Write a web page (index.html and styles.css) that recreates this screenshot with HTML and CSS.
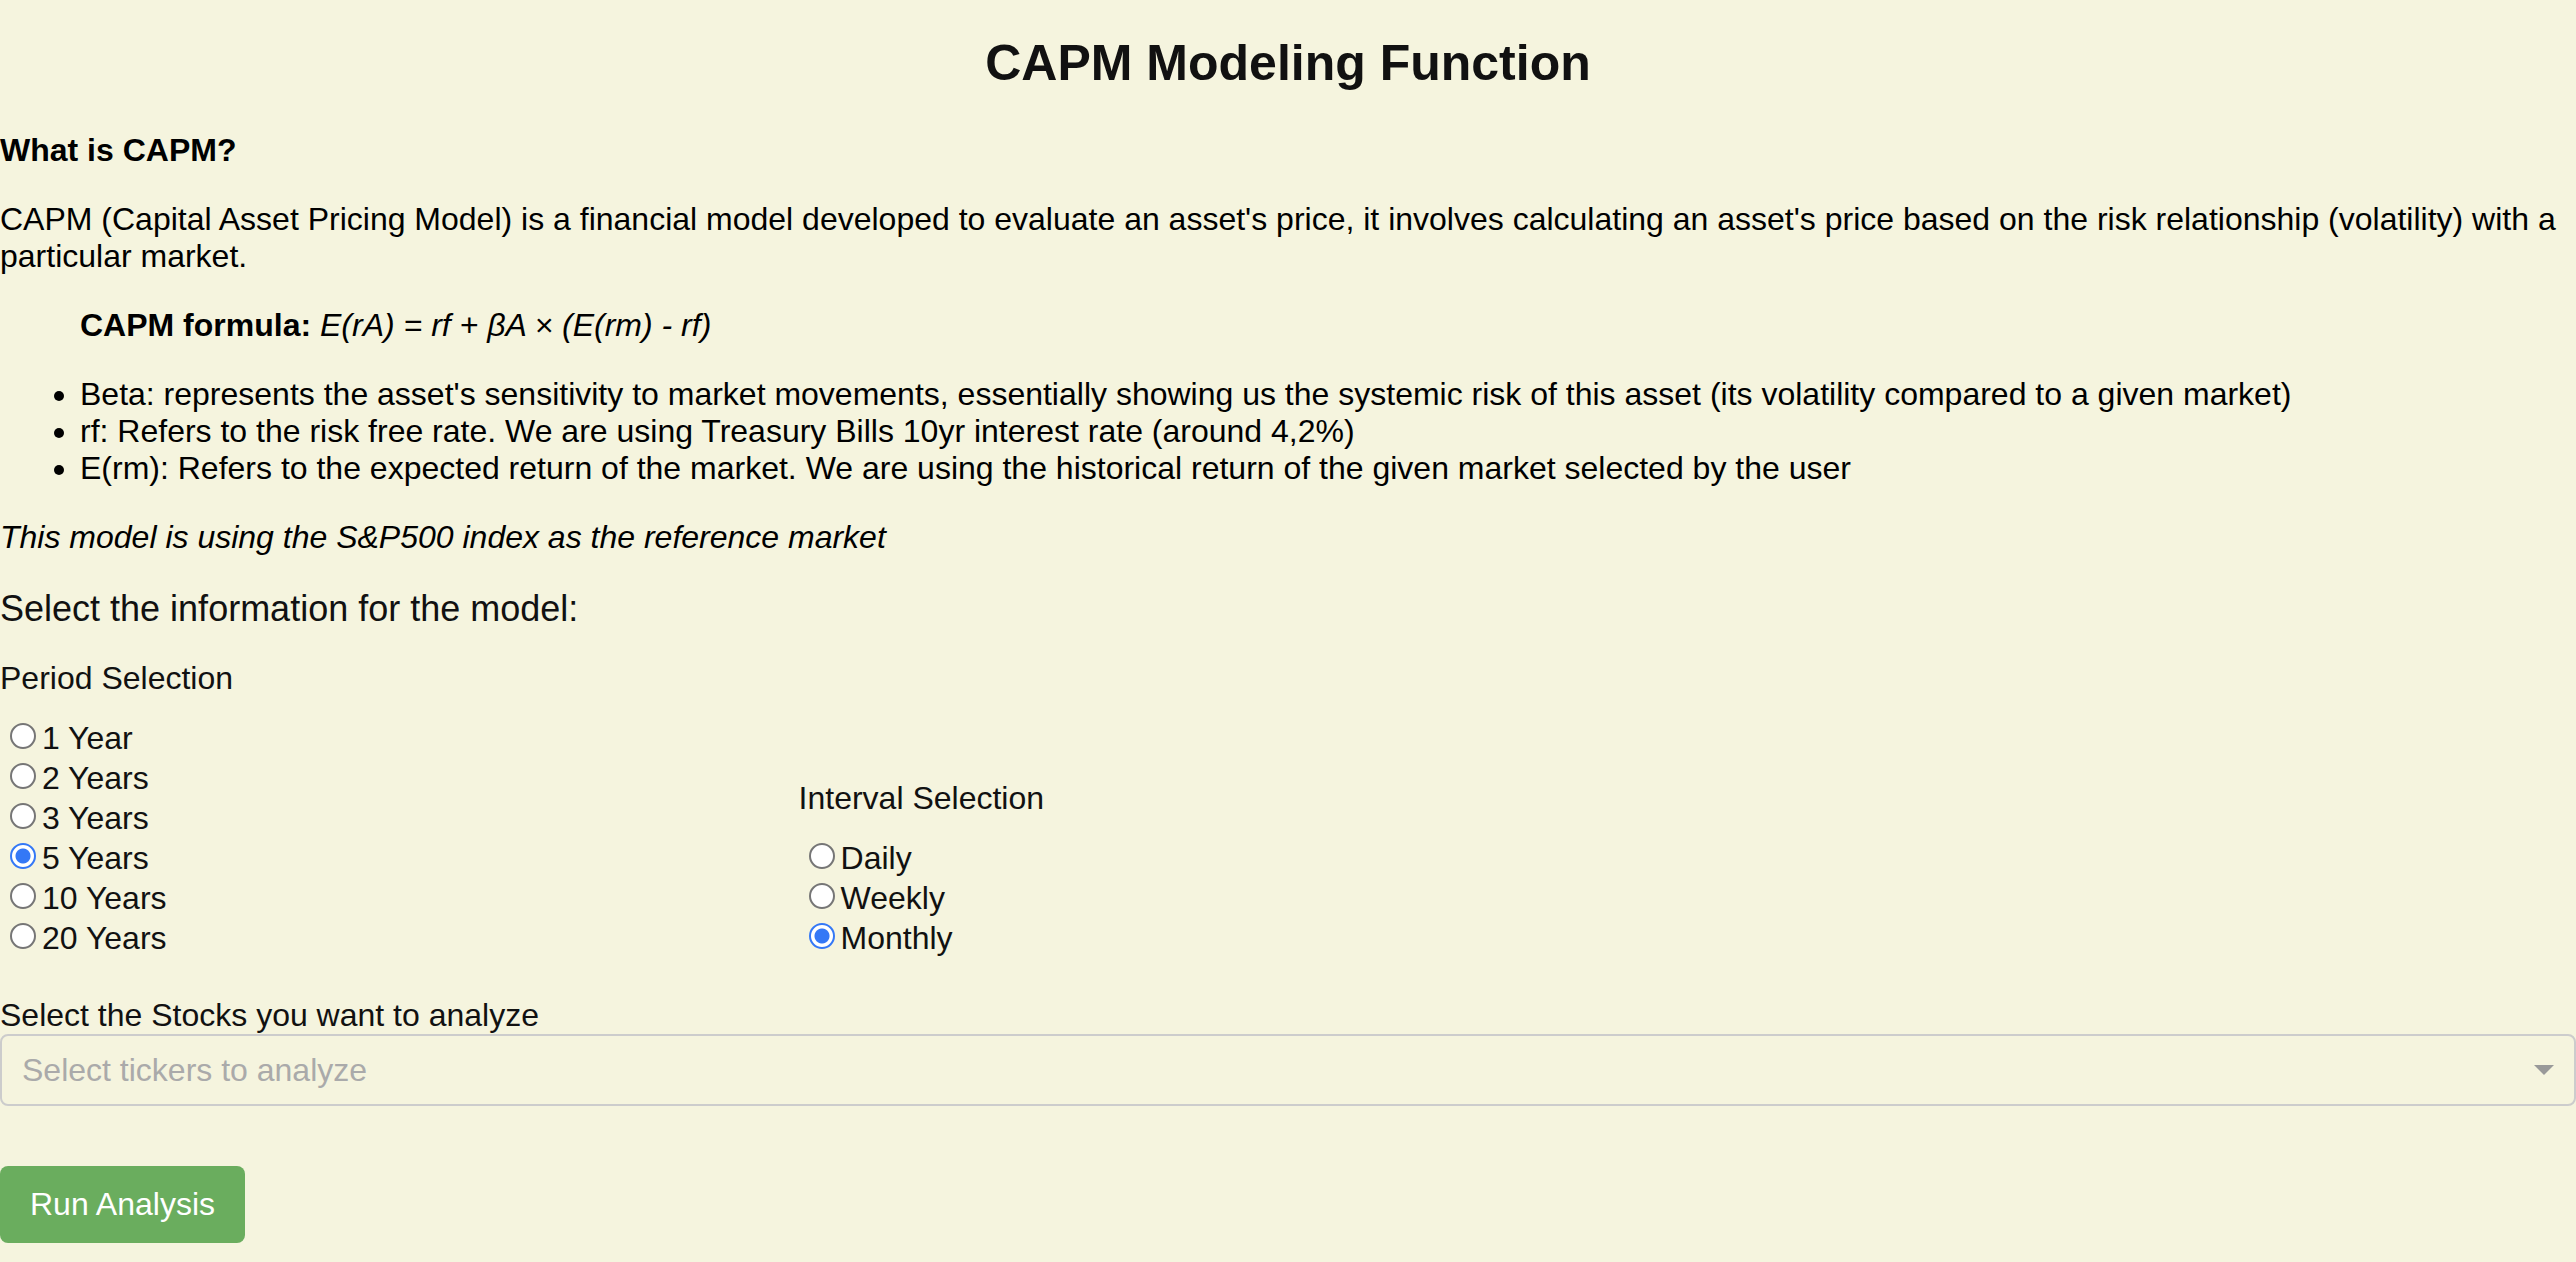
FILE: index.html
```html
<!DOCTYPE html>
<html lang="en">
<head>
  <meta charset="utf-8">
  <meta name="viewport" content="width=device-width, initial-scale=1">
  <title>CAPM Modeling Function</title>
  <link rel="stylesheet" href="styles.css">
</head>
<body>
  <main>
    <h1 class="title">CAPM Modeling Function</h1>

    <section class="intro">
      <p><strong>What is CAPM?</strong></p>
      <p>CAPM (Capital Asset Pricing Model) is a financial model developed to evaluate an asset's price, it involves calculating an asset's price based on the risk relationship (volatility) with a particular market.</p>
      <p class="formula"><strong>CAPM formula:</strong> <em>E(rA) = rf + βA × (E(rm) - rf)</em></p>
      <ul class="terms">
        <li>Beta: represents the asset's sensitivity to market movements, essentially showing us the systemic risk of this asset (its volatility compared to a given market)</li>
        <li>rf: Refers to the risk free rate. We are using Treasury Bills 10yr interest rate (around 4,2%)</li>
        <li>E(rm): Refers to the expected return of the market. We are using the historical return of the given market selected by the user</li>
      </ul>
      <p><em>This model is using the S&amp;P500 index as the reference market</em></p>
    </section>

    <form class="model-form">
      <h2 class="form-title">Select the information for the model:</h2>

      <div class="choices">
        <div class="choice-group" role="radiogroup" aria-labelledby="period-label">
          <p class="group-label" id="period-label">Period Selection</p>
          <label class="option"><input class="radio" type="radio" name="period" value="1y">1 Year</label>
          <label class="option"><input class="radio" type="radio" name="period" value="2y">2 Years</label>
          <label class="option"><input class="radio" type="radio" name="period" value="3y">3 Years</label>
          <label class="option"><input class="radio" type="radio" name="period" value="5y" checked>5 Years</label>
          <label class="option"><input class="radio" type="radio" name="period" value="10y">10 Years</label>
          <label class="option"><input class="radio" type="radio" name="period" value="20y">20 Years</label>
        </div>
        <div class="choice-group" role="radiogroup" aria-labelledby="interval-label">
          <p class="group-label" id="interval-label">Interval Selection</p>
          <label class="option"><input class="radio" type="radio" name="interval" value="1d">Daily</label>
          <label class="option"><input class="radio" type="radio" name="interval" value="1wk">Weekly</label>
          <label class="option"><input class="radio" type="radio" name="interval" value="1mo" checked>Monthly</label>
        </div>
      </div>

      <label class="field-label" for="tickers">Select the Stocks you want to analyze</label>
      <div class="dropdown">
        <select class="dropdown-control" id="tickers" name="tickers">
          <option value="">Select tickers to analyze</option>
        </select>
      </div>

      <button class="run-button" type="button">Run Analysis</button>
    </form>
  </main>
</body>
</html>
```
FILE: styles.css
```css
* {
  box-sizing: border-box;
}

body {
  margin: 0;
  background: #f5f4de;
  color: #000;
  font-family: "Liberation Sans", Arial, Helvetica, sans-serif;
  font-size: 32px;
  line-height: 37px;
}

.title {
  margin: 0;
  padding: 34px 0 40px;
  color: #111;
  font-size: 50px;
  line-height: 58px;
  text-align: center;
}

.intro p,
.terms {
  margin: 0 0 32px;
}

.intro .formula {
  padding-left: 80px;
}

.terms {
  padding-left: 80px;
}

.model-form {
  color: #111;
}

.form-title {
  margin: 0 0 31px;
  font-size: 36px;
  font-weight: 400;
  line-height: 41px;
}

.choices {
  display: flex;
  align-items: flex-end;
  margin-bottom: 39px;
}

.choice-group {
  flex: 0 0 31%;
}

.group-label {
  margin: 0 0 21px;
}

.option {
  display: flex;
  align-items: center;
  line-height: 40px;
}

.radio {
  appearance: none;
  width: 26px;
  height: 26px;
  margin: 0 6px 4px 10px;
  border: 2px solid #767676;
  border-radius: 50%;
  background: #fff;
}

.radio:checked {
  border-color: #3478f6;
  background: radial-gradient(circle, #3478f6 0 7px, #fff 8px);
}

.field-label {
  display: block;
}

.dropdown {
  position: relative;
  margin-bottom: 60px;
}

.dropdown::after {
  content: "";
  position: absolute;
  top: 31px;
  right: 22px;
  border: 10px solid transparent;
  border-top-color: #999;
  border-bottom-width: 0;
  pointer-events: none;
}

.dropdown-control {
  appearance: none;
  display: block;
  width: 100%;
  height: 72px;
  padding: 0 60px 0 20px;
  border: 2px solid #ccc;
  border-radius: 8px;
  background: transparent;
  color: #aaa;
  font: inherit;
}

.run-button {
  display: block;
  padding: 20px 30px;
  border: 0;
  border-radius: 8px;
  background: #6aad5e;
  color: #fff;
  font: inherit;
}
```
